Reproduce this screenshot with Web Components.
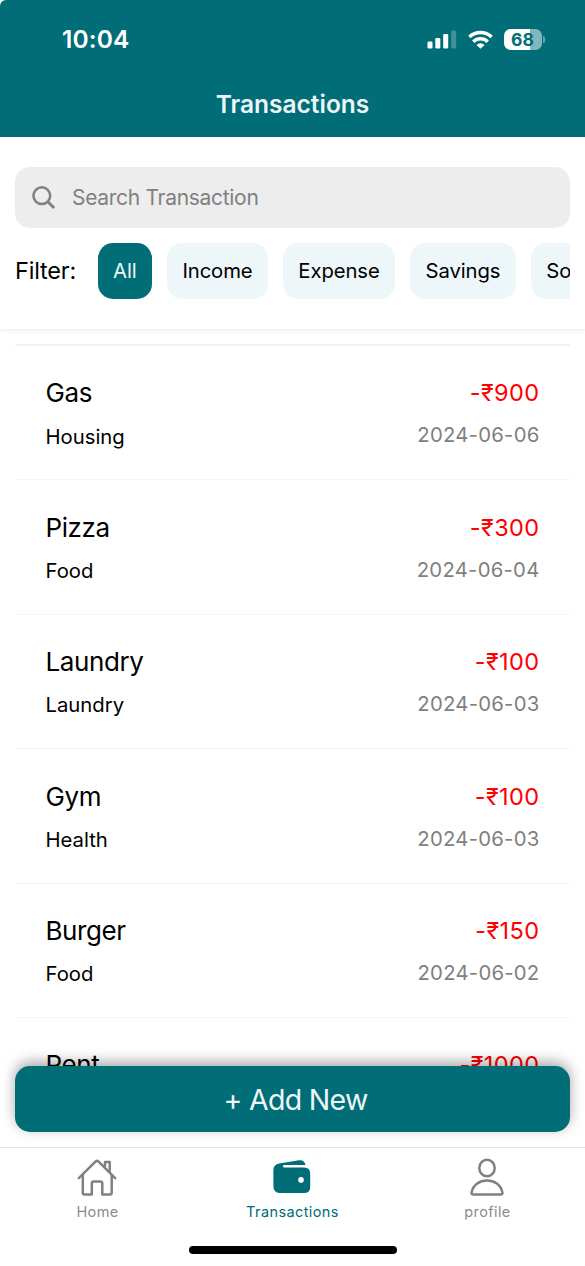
<!DOCTYPE html>
<html lang="en">
<head>
<meta charset="utf-8">
<title>Transactions</title>
<style>
html,body{margin:0;height:100%;overflow:hidden;background:#fff;font-family:Inter,"Liberation Sans",sans-serif;color:#000}
</style>
</head>
<body>
<transactions-app></transactions-app>
<script>
function define(name, html, setup) {
  const template = document.createElement('template');
  template.innerHTML = html;
  customElements.define(name, class extends HTMLElement {
    constructor() {
      super();
      this.attachShadow({ mode: 'open' }).append(template.content.cloneNode(true));
    }
    connectedCallback() { if (setup) setup(this, this.shadowRoot); }
  });
}

define('status-bar', `
<style>
:host{display:flex;height:78px;align-items:center;justify-content:space-between;padding:0 40px 0 62px;box-sizing:border-box;color:#fff}
.time{font-size:24.5px;font-weight:600;letter-spacing:.15px;line-height:30px}
.icons{display:flex;align-items:center}
.cell{margin-right:11px}.wifi{margin-right:11px}
.battery{width:38px;height:21px;border-radius:6.5px;background:linear-gradient(90deg,#fff 68%,#80b7bc 68%);color:#006d77;font-size:17.5px;font-weight:700;line-height:21px;text-align:center;text-indent:-1px}
.cap{width:2px;height:7px;margin:0 0 0 1px;border-radius:0 2px 2px 0;background:#66a7ad}
</style>
<span class="time">10:04</span>
<div class="icons">
<svg class="cell" width="30" height="19" viewBox="0 0 30 19" fill="#fff"><rect x=".5" y="11.5" width="5" height="7" rx="1.3"/><rect x="8.3" y="8" width="5" height="10.5" rx="1.3"/><rect x="16.2" y="4" width="5" height="14.5" rx="1.3"/><rect x="24.2" y=".5" width="5" height="18" rx="1.3" opacity=".25"/></svg>
<svg class="wifi" width="25" height="19" viewBox="0 0 25 19" fill="none" stroke="#fff" stroke-width="3.5"><path d="M1.4 6.9A16 16 0 0 1 23.6 6.9"/><path d="M5.3 11.8A10.3 10.3 0 0 1 19.7 11.8"/><path d="M12.5 18.8 8.4 14.9Q12.5 11.5 16.6 14.9Z" fill="#fff" stroke="none"/></svg>
<div class="battery">68</div><div class="cap"></div>
</div>`);

define('app-header', `
<style>
:host{display:flex;flex-direction:column;height:136.5px;background:#006d77;border-radius:6px 0 0 0;color:#fff;flex:none}
h1{margin:10.5px 0 0;font-size:24.5px;line-height:30px;font-weight:600;text-align:center;color:#edf6f9}
</style>
<status-bar></status-bar><h1><slot></slot></h1>`);

define('search-field', `
<style>
:host{display:flex;align-items:center;height:61px;box-sizing:border-box;border-radius:15px;background:#ededed;padding-left:16px;gap:16px;color:#808080;font-size:21px}
span{letter-spacing:-.3px}
</style>
<svg width="25" height="26" viewBox="0 0 25 26" fill="none" stroke="#808080" stroke-width="2.5"><circle cx="10.8" cy="10.7" r="8.4"/><path d="m16.9 16.8 6.2 6.2" stroke-width="3"/></svg>
<span><slot></slot></span>`);

define('filter-chip', `
<style>
:host{display:flex;align-items:center;justify-content:center;flex:none;width:var(--w);height:55.5px;border-radius:15px;background:#edf6f9;color:#000;font-size:20.3px;letter-spacing:-.1px}
:host([active]){background:#006d77;color:#edf6f9}
</style><slot></slot>`);

define('filter-bar', `
<style>
:host{display:flex;align-items:center;margin-top:15px}
.label{width:82.5px;flex:none;font-size:23.5px;letter-spacing:-.2px}
.chips{display:flex;gap:15px;overflow:hidden;flex:1}
</style>
<span class="label">Filter:</span>
<div class="chips">
<filter-chip active style="--w:54.5px">All</filter-chip><filter-chip style="--w:101px">Income</filter-chip><filter-chip style="--w:112px">Expense</filter-chip><filter-chip style="--w:106px">Savings</filter-chip><filter-chip style="--w:88px">Social</filter-chip>
</div>`);

define('transaction-row', `
<style>
:host{display:flex;justify-content:space-between;height:134.45px;box-sizing:border-box;padding:30.3px 30.5px 0 30.5px;border-bottom:1.5px solid #edf6f9;flex:none}
div{display:flex;flex-direction:column}
.right{align-items:flex-end}
.title{font-size:26px;line-height:34px;letter-spacing:-.4px}
.cat{font-size:20.3px;line-height:26px;margin-top:13.3px}
.amount{color:#f00;font-size:23.5px;line-height:34px;letter-spacing:.4px}
.date{color:#808080;font-size:20.3px;line-height:26px;margin-top:12px;letter-spacing:.25px}
</style>
<div><span class="title"></span><span class="cat"></span></div>
<div class="right"><span class="amount"></span><span class="date"></span></div>`, (host, root) => {
  for (const key of ['title', 'cat', 'amount', 'date'])
    root.querySelector('.' + key).textContent = host.dataset[key];
});

define('add-button', `
<style>
:host{position:absolute;left:15px;right:15px;bottom:15px;height:66px;border-radius:15px;background:#006d77;color:#edf6f9;display:flex;align-items:center;justify-content:center;font-size:28.5px;font-weight:400;letter-spacing:-.7px;box-sizing:border-box;padding-left:6px;box-shadow:0 -4px 14px rgba(0,0,0,.35)}
</style><slot></slot>`);

define('tab-item', `
<style>
:host{display:flex;flex:1;flex-direction:column;align-items:center;color:#8b8b8b;font-size:14.5px;letter-spacing:.4px}
:host([active]){color:#006d77}
.icon{display:flex;height:43px;margin:10px 1.5px 0 0}
.text{line-height:20px;margin-top:1px}
</style>
<div class="icon"><slot name="icon"></slot></div><span class="text"><slot></slot></span>`);

define('tab-bar', `
<style>
:host{display:flex;flex-direction:column;height:119px;flex:none;box-sizing:border-box;border-top:1.5px solid #e3e4e4;background:#fff}
nav{display:flex;flex:1}
.home{width:208px;height:8px;border-radius:4px;background:#000;margin:0 auto 12px 188.5px;flex:none}
</style>
<nav>
<tab-item><svg slot="icon" width="42" height="42" viewBox="0 0 42 42" fill="none" stroke="#808080" stroke-width="2.5" stroke-linejoin="round" stroke-linecap="round"><path d="M2.8 20.2 19.4 3.6Q21 2 22.6 3.6L39.2 20.2"/><path d="M6.8 17V34.8Q6.8 36.5 8.5 36.5H15.8V25.6Q15.8 23.6 17.8 23.6H24.3Q26.3 23.6 26.3 25.6V36.5H34Q35.7 36.5 35.7 34.8V17M29 8V4H33.7V13.5"/></svg>Home</tab-item>
<tab-item active><svg slot="icon" width="42" height="42" viewBox="0 0 42 42"><path fill="#006d77" d="M2.4 17V28Q2.4 35 8.7 35H33Q39.2 35 39.2 28.9V15.7Q39.2 9.4 33 9.4H14Q11.8 9.4 11.8 8.2Q11.8 7.1 14 7.1H34.5Q33.4 1.5 28 2.3L8.2 5.6Q2.4 6.8 2.4 12Z"/><circle cx="30" cy="21.9" r="2.8" fill="#fff"/></svg>Transactions</tab-item>
<tab-item><svg slot="icon" width="42" height="42" viewBox="0 0 42 42" fill="none" stroke="#808080" stroke-width="2.5" stroke-linejoin="round"><ellipse cx="21" cy="10" rx="7.7" ry="8.3"/><path d="M7.4 36.4H34.6Q36.8 36.4 36.4 34.4C34.8 26.6 28.2 22.6 21 22.6S7.2 26.6 5.6 34.4Q5.2 36.4 7.4 36.4Z"/></svg>profile</tab-item>
</nav><div class="home"></div>`);

define('transactions-app', `
<style>
:host{display:flex;flex-direction:column;height:1266px;width:585px;background:#fff;overflow:hidden}
.panel{height:192px;box-sizing:border-box;padding:30.5px 15px 0;flex:none;background:#fff;box-shadow:0 1px 5px rgba(0,0,0,.09);z-index:1}
main{position:relative;flex:1;min-height:0;overflow:hidden;padding:0 15px}
.list{margin-top:15.5px;border-top:2px solid #edf6f9}
</style>
<app-header>Transactions</app-header>
<section class="panel"><search-field>Search Transaction</search-field><filter-bar></filter-bar></section>
<main><div class="list">
<transaction-row data-title="Gas" data-cat="Housing" data-amount="-₹900" data-date="2024-06-06"></transaction-row>
<transaction-row data-title="Pizza" data-cat="Food" data-amount="-₹300" data-date="2024-06-04"></transaction-row>
<transaction-row data-title="Laundry" data-cat="Laundry" data-amount="-₹100" data-date="2024-06-03"></transaction-row>
<transaction-row data-title="Gym" data-cat="Health" data-amount="-₹100" data-date="2024-06-03"></transaction-row>
<transaction-row data-title="Burger" data-cat="Food" data-amount="-₹150" data-date="2024-06-02"></transaction-row>
<transaction-row data-title="Rent" data-cat="Housing" data-amount="-₹1000" data-date="2024-06-01"></transaction-row>
</div><add-button>+ Add New</add-button></main>
<tab-bar></tab-bar>`);
</script>
</body>
</html>
